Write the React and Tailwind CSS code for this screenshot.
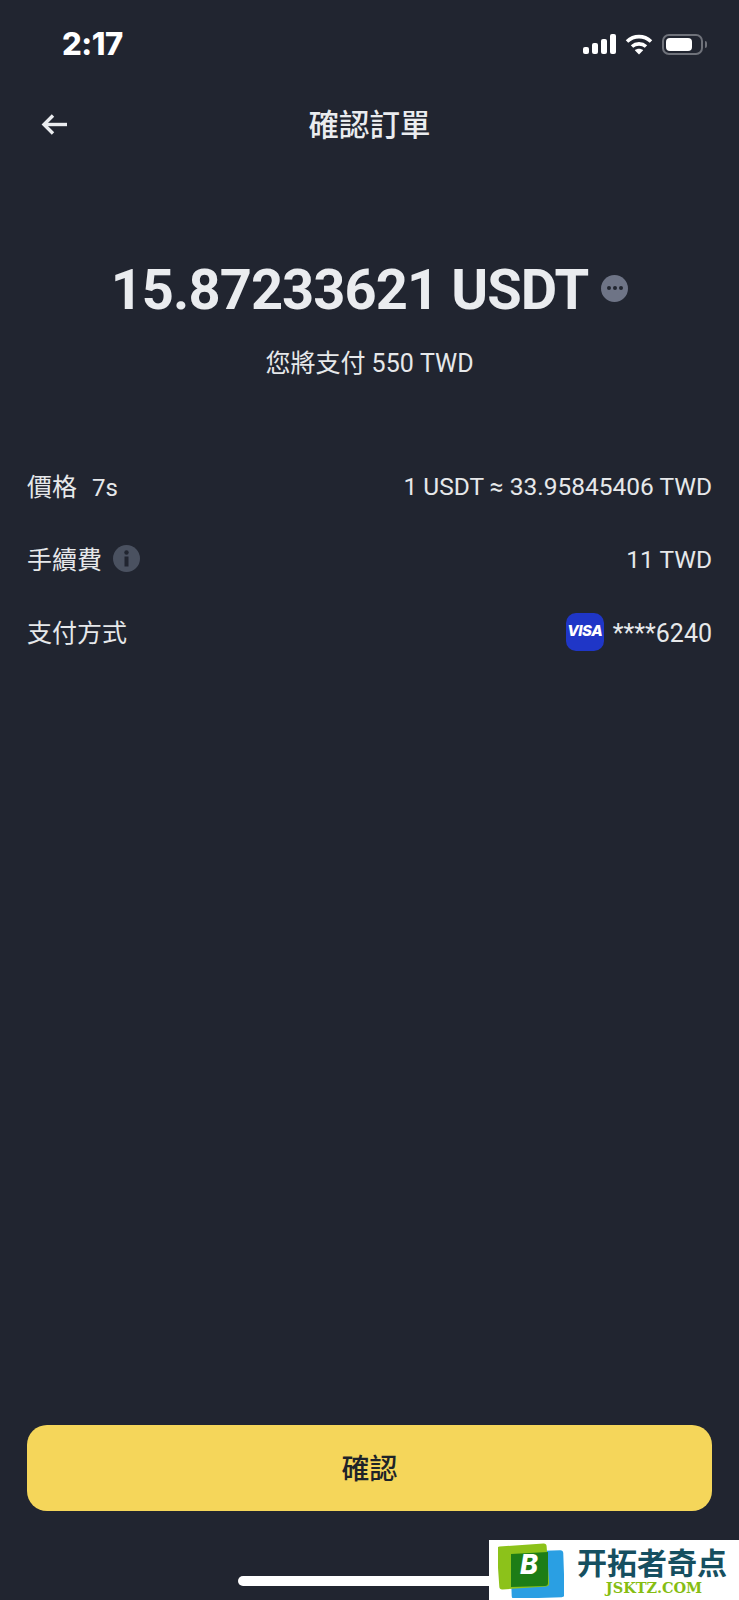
import React from "react";

const cjk = "font-['Roboto','Noto_Sans_CJK_TC',sans-serif]";

function StatusIcons() {
  return (
    <div className="flex items-center gap-[9px]">
      <svg width="33" height="20" viewBox="0 0 33 20" fill="#fff">
        <rect x="0" y="13" width="6" height="7" rx="2" />
        <rect x="9" y="9" width="6" height="11" rx="2" />
        <rect x="18" y="5" width="6" height="15" rx="2" />
        <rect x="27" y="0" width="6" height="20" rx="2" />
      </svg>
      <svg width="28" height="21" viewBox="0 0 28 21" fill="none" stroke="#fff" strokeWidth="3.6">
        <path d="M2 7.5C9 1 19 1 26 7.5" />
        <path d="M7 12.5C11 9 17 9 21 12.5" />
        <path d="M14 20.5L9.8 16.2C12 14.2 16 14.2 18.2 16.2Z" fill="#fff" stroke="none" />
      </svg>
      <div className="flex items-center gap-[2px]">
        <div className="w-[41px] h-[21px] rounded-[7px] border-2 border-[#6f727a] p-[2px]">
          <div className="w-[26px] h-full rounded-[4px] bg-white" />
        </div>
        <div className="w-[2px] h-[7px] rounded-r-full bg-[#6f727a]" />
      </div>
    </div>
  );
}

function DetailRow({ children }) {
  return <div className="h-[73px] flex items-center justify-between text-[25px] text-[#e6e8ea]">{children}</div>;
}

export default function App() {
  return (
    <div className={`relative w-[739px] h-[1600px] overflow-hidden bg-[#212530] flex flex-col ${cjk}`}>
      {/* status bar */}
      <div className="h-[88px] pl-[62px] pr-[32px] flex items-center justify-between">
        <span className="text-[31px] font-extrabold text-white font-['Inter',sans-serif] tracking-[-0.5px]">2:17</span>
        <StatusIcons />
      </div>

      {/* header */}
      <div className="relative h-[73px] pt-[2px] flex items-center justify-center">
        <svg className="absolute left-[41px] top-[26px]" width="26" height="21" viewBox="0 0 26 21" fill="none" stroke="#eaecef" strokeWidth="3.4">
          <path d="M26 10.5H3" />
          <path d="M12 1.5L3 10.5L12 19.5" />
        </svg>
        <span className="text-[30.5px] font-medium text-[#eaecef]">確認訂單</span>
      </div>

      {/* amount */}
      <div className="mt-[91px] flex items-center justify-center gap-[13px]">
        <span className="text-[56px] leading-[76px] font-bold text-[#eaecef] tracking-[-0.9px]">15.87233621 USDT</span>
        <div className="w-[27px] h-[27px] mb-[4px] rounded-full bg-[#6e7486] flex items-center justify-center gap-[2px]">
          <span className="w-[4px] h-[4px] rounded-full bg-[#212530]" />
          <span className="w-[4px] h-[4px] rounded-full bg-[#212530]" />
          <span className="w-[4px] h-[4px] rounded-full bg-[#212530]" />
        </div>
      </div>
      <div className="mt-[18px] text-center text-[25px] leading-[36px] text-[#e6e8ea]">您將支付 550 TWD</div>

      {/* details */}
      <div className="mt-[69px] px-[27px]">
        <DetailRow>
          <span>價格<span className="ml-[15px] text-[24px]">7s</span></span>
          <span className="text-[24.5px]">1 USDT ≈ 33.95845406 TWD</span>
        </DetailRow>
        <DetailRow>
          <span className="flex items-center gap-[11px]">
            手續費
            <svg className="mb-[4px]" width="27" height="27" viewBox="0 0 27 27">
              <circle cx="13.5" cy="13.5" r="13.5" fill="#4a5160" />
              <circle cx="13.5" cy="7.5" r="2.2" fill="#212530" />
              <rect x="11.5" y="11.5" width="4" height="10" fill="#212530" />
            </svg>
          </span>
          <span className="text-[24.5px]">11 TWD</span>
        </DetailRow>
        <DetailRow>
          <span>支付方式</span>
          <span className="flex items-center gap-[9px]">
            <span className="w-[38px] h-[38px] mb-[4px] rounded-[10px] bg-[#1f36c7] flex items-center justify-center text-white text-[15px] font-extrabold italic font-['Inter',sans-serif] tracking-[-0.5px]">VISA</span>
            ****6240
          </span>
        </DetailRow>
      </div>

      <div className="flex-1" />

      {/* confirm */}
      <div className="px-[27px]">
        <button type="button" className="w-full h-[86px] pt-[3px] rounded-[20px] bg-[#f5d65a] text-[28px] font-medium text-[#1e2329]">確認</button>
      </div>
      <div className="h-[89px] flex items-end justify-center pb-[14px]">
        <div className="w-[263px] h-[10px] rounded-full bg-white" />
      </div>

      {/* watermark */}
      <div className="absolute right-0 bottom-0 w-[250px] h-[60px] bg-white flex items-center pl-[9px]">
        <svg width="66" height="56" viewBox="0 0 66 56">
          <rect x="13" y="9" width="53" height="47" rx="3" fill="#2a9fe3" transform="rotate(-2 40 33)" />
          <rect x="0" y="3" width="50" height="43" rx="3" fill="#8cc21a" transform="rotate(-4 25 25)" />
          <path d="M13 12L50 10L50 41Q50 44 47 44L13 45Z" fill="#1d7d16" />
        </svg>
        <div className="ml-[13px] flex flex-col items-center">
          <span className="text-[30px] leading-[36px] font-bold text-[#164f60] font-['Noto_Sans_CJK_SC',sans-serif]">开拓者奇点</span>
          <span className="ml-[4px] text-[14.5px] leading-[18px] font-bold text-[#86bd12] font-['DejaVu_Serif',serif]">JSKTZ.COM</span>
        </div>
        <span className="absolute left-[31px] top-[9px] text-[27px] leading-[32px] font-extrabold italic text-white font-['Inter',sans-serif]">B</span>
      </div>
    </div>
  );
}
